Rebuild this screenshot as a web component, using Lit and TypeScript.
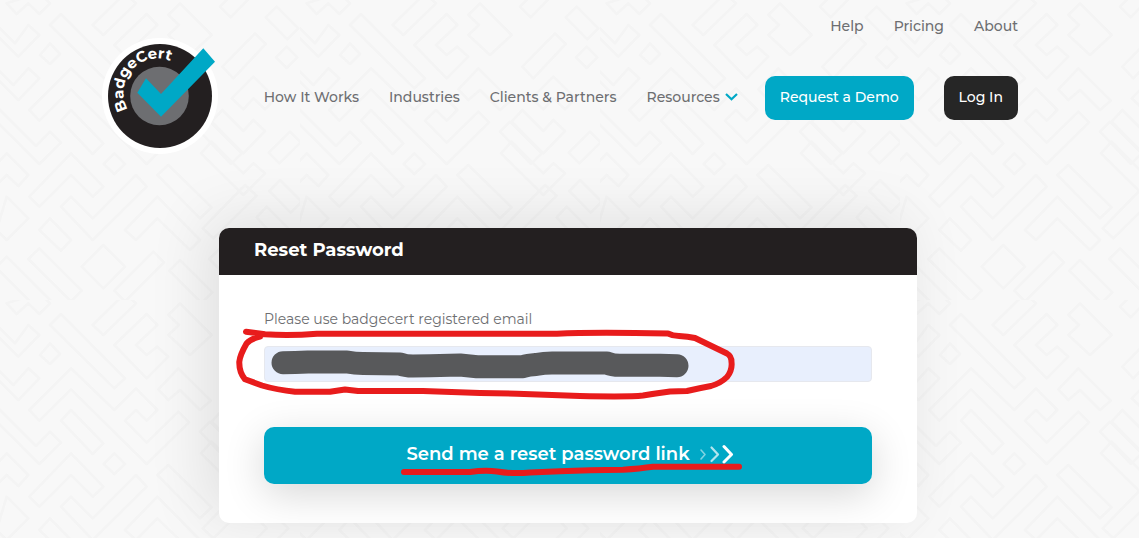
import { LitElement, html, css, svg, unsafeCSS } from "lit";
import { customElement } from "lit/decorators.js";

// Closed outlines of the maze texture, on a 900 unit tile drawn at 300px.
const maze = [
  "150,130 180,162 150,192 120,165",
  "343,460 375,492 343,522 311,492",
  "183,42 375,235 343,265 150,75",
  "213,205 343,330 408,265 472,330 440,362 408,330 375,362 440,428 535,335 567,367 440,492 213,268 118,362 88,330",
  "213,330 310,430 278,462 183,362",
  "213,460 310,560 278,590 213,525 118,620 88,590",
  "408,525 440,560 278,720 183,620 213,590 278,655",
  "505,495 635,622 600,655 472,525",
  "472,590 600,720 570,750 472,655 408,720 375,690",
  "-10,320 108,438 150,395 183,428 118,492 -10,365",
  "20,460 85,525 55,558 20,525 -10,555 -40,525",
  "-10,75 45,130 85,75 118,105 55,170 -10,105",
  "-10,205 40,255 85,205 118,235 55,300 -10,235",
  "20,10 50,42 85,10 118,42 150,10 118,-22",
  "375,-20 408,10 310,105 278,75",
  "440,42 472,75 408,135 440,165 472,140 505,170 440,235 343,135",
  "540,10 635,105 570,165 505,105 537,75 505,45",
  "535,205 632,302 600,330 540,270 505,300 475,268",
  "20,590 85,655 20,720 -10,690",
  "150,655 213,720 183,752 118,690",
  "630,365 725,460 693,492 600,395",
  "660,20 755,-75 785,-43 692,52",
  "765,100 797,132 700,235 667,200",
  "760,230 827,295 795,328 760,295 730,328 695,295",
  "667,330 730,393 760,360 795,393 730,460 635,365",
  "635,425 730,520 760,490 795,520 730,585 603,460",
  "735,555 770,587 640,715 608,685",
  "830,20 895,85 862,118 797,52",
  "860,140 892,172 860,204 828,172",
  "870,395 902,427 838,490 806,458",
  "840,540 905,605 872,638 808,573",
  "800,620 865,685 770,780 738,748 800,685 770,652",
  "20,770 180,930 148,962 -12,802",
  "118,745 245,872 213,904 85,777",
  "310,735 375,800 310,865 245,800",
  "460,755 492,787 375,904 343,872",
  "540,780 637,877 605,909 508,812",
  "660,745 790,875 758,907 628,777",
  "850,760 882,792 800,874 768,842",
];

const tile = encodeURIComponent(
  `<svg xmlns="http://www.w3.org/2000/svg" width="300" height="300" viewBox="0 0 900 900"><g fill="none" stroke="#f4f4f4" stroke-width="8" stroke-linejoin="round">${maze
    .map((points) => `<polygon points="${points}"/>`)
    .join("")}</g></svg>`
);

const logo = svg`
  <circle cx="160" cy="96" r="58" fill="#fff" />
  <circle cx="160" cy="96" r="52" fill="#231f20" />
  <circle cx="159.500" cy="96" r="29.300" fill="#6d6e71" />
  <path id="arc" d="M128 109.500A34 34 0 0 1 187 75.500" fill="none" />
  <text class="logo-text"><textPath href="#arc">BadgeCert</textPath></text>
  <path d="M203.300 48.300L215 61.700L161 116.700L137.300 92.700L146 78.300L161 94Z" fill="#00a8c6" />
`;

@customElement("app-root")
export class AppRoot extends LitElement {
  static styles = css`
    :host {
      display: block;
      min-height: 100vh;
      box-sizing: border-box;
      padding: 16px 19px 15px 16px;
      background: #f8f8f8 url("data:image/svg+xml,${unsafeCSS(tile)}");
      font-family: Montserrat, Inter, "Open Sans", sans-serif;
      font-size: 14px;
      line-height: 20px;
      color: #6d6e71;
    }
    header {
      display: flex;
      justify-content: space-between;
      max-width: 900px;
      margin: 0 auto;
    }
    .logo {
      flex: none;
      margin: 22px 0 0 -16px;
      height: 116px;
    }
    .logo svg {
      display: block;
      width: 116px;
      height: 116px;
    }
    .logo-text {
      font-size: 15px;
      font-weight: 700;
      fill: #fff;
    }
    .menus {
      display: flex;
      flex-direction: column;
      align-items: flex-end;
      gap: 40px;
    }
    nav,
    .links {
      display: flex;
      align-items: center;
      gap: 30px;
    }
    .main {
      gap: 27px;
    }
    .main .links {
      padding-bottom: 2px;
    }
    .actions {
      display: flex;
      gap: 30px;
    }
    nav a {
      color: inherit;
      font-weight: 500;
      text-decoration: none;
      white-space: nowrap;
    }
    .more {
      display: flex;
      align-items: center;
      gap: 5px;
    }
    nav .cta {
      padding: 11px 15px 13px;
      border-radius: 10px;
      background: #00a8c6;
      color: #fff;
    }
    nav .dark {
      background: #262626;
    }
    .card {
      position: relative;
      max-width: 698px;
      margin: 74px auto 0;
      border-radius: 10px;
      background: #fff;
      box-shadow: -12px -8px 60px rgba(0, 0, 0, 0.1);
    }
    h1 {
      margin: 0;
      padding: 10px 35px 13px;
      border-radius: 10px 10px 0 0;
      background: #231f20;
      color: #fff;
      font-size: 18px;
      line-height: 24px;
      font-weight: 700;
    }
    form {
      display: flex;
      flex-direction: column;
      padding: 34px 45px 39px;
    }
    label {
      font-weight: 400;
      margin-bottom: 17px;
    }
    input {
      box-sizing: border-box;
      width: 100%;
      height: 36px;
      padding: 0 10px;
      border: 1px solid #e6e8ee;
      border-radius: 4px;
      background: #e8effd;
      font: inherit;
    }
    button {
      display: flex;
      align-items: center;
      justify-content: center;
      gap: 9px;
      margin-top: 45px;
      padding: 15px 18px 18px 22px;
      border: 0;
      border-radius: 10px;
      background: #00a8c6;
      box-shadow: 0 10px 40px rgba(0, 0, 0, 0.16);
      color: #fff;
      font: 600 18px/24px Montserrat, Inter, "Open Sans", sans-serif;
    }
    .marks {
      position: absolute;
      inset: 0;
      width: 100%;
      height: 100%;
      overflow: visible;
      pointer-events: none;
    }
  `;

  render() {
    return html`
      <header>
        <a class="logo" href="#" aria-label="BadgeCert">
          <svg viewBox="102 38 116 116">${logo}</svg>
        </a>
        <div class="menus">
          <nav>
            <a href="#">Help</a>
            <a href="#">Pricing</a>
            <a href="#">About</a>
          </nav>
          <nav class="main">
            <div class="links">
              <a href="#">How It Works</a>
              <a href="#">Industries</a>
              <a href="#">Clients &amp; Partners</a>
              <a class="more" href="#">
                Resources
                <svg width="13" height="8" viewBox="0 0 13 8" fill="none" stroke="#00a8c6" stroke-width="2.2">
                  <path d="M1 1L6.500 6.300L12 1" />
                </svg>
              </a>
            </div>
            <div class="actions">
              <a class="cta" href="#">Request a Demo</a>
              <a class="cta dark" href="#">Log In</a>
            </div>
          </nav>
        </div>
      </header>
      <main class="card">
        <h1>Reset Password</h1>
        <form>
          <label for="email">Please use badgecert registered email</label>
          <input id="email" type="email" />
          <button type="button">
            Send me a reset password link
            <svg width="35" height="20" viewBox="0 0 35 20" fill="none" stroke="#fff" stroke-linecap="round" stroke-linejoin="round">
              <path d="M2 6L6 10.500L2 15" stroke-width="1.600" opacity=".5" />
              <path d="M12.500 3.500L19 10.500L12.500 17" stroke-width="2.200" opacity=".7" />
              <path d="M25 2.500L32.500 10.500L25 18" stroke-width="3" />
            </svg>
          </button>
        </form>
        <svg class="marks" viewBox="219 228 698 295" fill="none" stroke-linecap="round" stroke-linejoin="round" aria-hidden="true">
          <path
            stroke="#58595b"
            stroke-width="23"
            d="M283 362.700Q295 362.700 308 362H347Q355 363.500 363 363.500L400 364Q405 366 413 366L430 365.700L460 365L477 366.700H523Q528 365 536 364.500Q544 363 552 363H607Q612 365.300 620 365.300H660L677 365.700"
          />
          <g stroke="#e81c1c" stroke-width="6">
            <path
              d="M246 331.700L265 334.300Q290 336 317 333.700H557Q593 332 668 333.500Q673 336 679 336Q688 336.500 695 338L727 353.500Q731.500 356 731.500 362Q732.500 370 727 377Q721 383 711 386Q700 388 687 391L670 391.500Q655 393.500 643 395.500Q630 397 580 396L517 393.700L480 393L423 391H358L345 389.500L330 391.700H295Q277 390 262 385.500L245 379.300Q239 372 239.300 361.700Q240 355 246.700 343.300Q250 339 260 336.700"
            />
            <path d="M404 472H470Q485 470 497 471.500Q512 474 530 472.500Q560 471 590 470.300L623 469.700Q640 468.500 653 466.700H739" />
          </g>
        </svg>
      </main>
    `;
  }
}
